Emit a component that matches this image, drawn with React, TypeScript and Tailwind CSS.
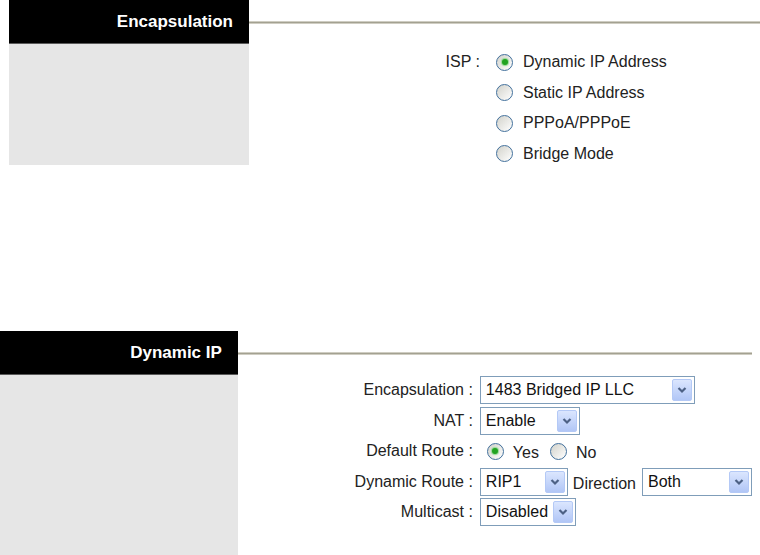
import type { ReactNode } from 'react';

const font = { fontFamily: '"Liberation Sans", Arial, sans-serif' };

function Radio({ checked = false }: { checked?: boolean }) {
    return (
        <span className="w-[17px] h-[17px] shrink-0 rounded-full border-[1.5px] border-[#42709c] bg-linear-to-br from-[#d2d2cb] to-white flex items-center justify-center">
            {checked && <span className="w-[6px] h-[6px] rounded-full bg-[#22a322] shadow-[0_0_1px_1px_#93da93]" />}
        </span>
    );
}

function Select({ value, width }: { value: string; width: string }) {
    return (
        <div className={`${width} h-[28px] border border-[#7f9db9] bg-white flex items-stretch p-[2px]`}>
            <span className="flex-1 flex items-center pl-[3px] text-[16px] text-[#111] whitespace-nowrap overflow-hidden">
                {value}
            </span>
            <span className="w-[20px] rounded-[2px] border border-[#b4c9f6] bg-linear-to-b from-[#dbe6fe] to-[#b1c6f6] flex items-center justify-center">
                <svg width="10" height="8" viewBox="0 0 10 8">
                    <path d="M1.5 2 L5 5.5 L8.5 2" fill="none" stroke="#4d6185" strokeWidth="2.2" />
                </svg>
            </span>
        </div>
    );
}

function Header({ title }: { title: string }) {
    return (
        <div className="h-[44px] bg-black border-b border-[#5a5a5a] flex items-center justify-end pr-4">
            <span className="text-white font-bold text-[17px]">{title}</span>
        </div>
    );
}

function Rule() {
    return <div className="h-[3px] w-full border-y border-[#cfcdc2] bg-[#a3a191]" />;
}

function Label({ children }: { children: ReactNode }) {
    return <div className="flex items-center justify-end text-[16px] text-[#222] whitespace-nowrap">{children}</div>;
}

export default function App() {
    const isp = ['Dynamic IP Address', 'Static IP Address', 'PPPoA/PPPoE', 'Bridge Mode'];

    return (
        <div className="w-[760px] h-[555px] bg-white overflow-hidden" style={font}>
            {/* Encapsulation */}
            <section className="h-[165px] flex items-start pl-[9px]">
                <div className="w-[240px] h-[165px] flex flex-col">
                    <Header title="Encapsulation" />
                    <div className="flex-1 bg-[#e6e6e6]" />
                </div>
                <div className="flex-1">
                    <div className="h-[44px] flex items-center">
                        <Rule />
                    </div>
                    <div className="grid grid-cols-[231px_auto] items-start gap-x-[16px] pt-[3px]">
                        <div className="h-[30px] flex items-center justify-end text-[16px] text-[#222]">ISP :</div>
                        <div className="flex flex-col">
                            {isp.map((item, i) => (
                                <div key={item} className="h-[30.5px] flex items-center gap-[10px] text-[16px] text-[#222]">
                                    <Radio checked={i === 0} />
                                    <span className="whitespace-nowrap">{item}</span>
                                </div>
                            ))}
                        </div>
                    </div>
                </div>
            </section>

            {/* Dynamic IP */}
            <section className="flex items-start mt-[166px]">
                <div className="w-[240px] h-[224px] flex flex-col">
                    <Header title="Dynamic IP" />
                    <div className="flex-1 bg-[#e6e6e6]" />
                </div>
                <div className="flex-1 pr-[8px]">
                    <div className="h-[44px] flex items-center">
                        <Rule />
                    </div>
                    <div className="grid grid-cols-[235px_auto] gap-x-[7px] gap-y-[2.5px] auto-rows-[28px] pt-[1px]">
                        <Label>Encapsulation :</Label>
                        <div className="flex items-center">
                            <Select value="1483 Bridged IP LLC" width="w-[215px]" />
                        </div>

                        <Label>NAT :</Label>
                        <div className="flex items-center">
                            <Select value="Enable" width="w-[100px]" />
                        </div>

                        <Label>Default Route :</Label>
                        <div className="flex items-center text-[16px] text-[#222] pl-[7px]">
                            <Radio checked />
                            <span className="ml-[9px] mt-[3px]">Yes</span>
                            <span className="ml-[11px]"><Radio /></span>
                            <span className="ml-[9px] mt-[3px]">No</span>
                        </div>

                        <Label>Dynamic Route :</Label>
                        <div className="flex items-center text-[16px] text-[#222]">
                            <Select value="RIP1" width="w-[88px]" />
                            <span className="ml-[5px] mt-[5px]">Direction</span>
                            <span className="ml-[6px]">
                                <Select value="Both" width="w-[110px]" />
                            </span>
                        </div>

                        <Label>Multicast :</Label>
                        <div className="flex items-center">
                            <Select value="Disabled" width="w-[96px]" />
                        </div>
                    </div>
                </div>
            </section>
        </div>
    );
}
